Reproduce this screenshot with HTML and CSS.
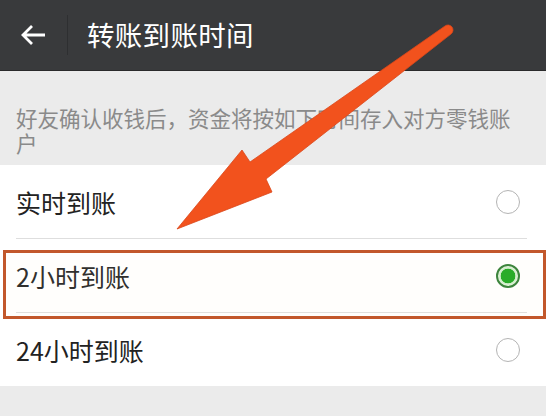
FILE: index.html
```html
<!DOCTYPE html>
<html lang="zh-CN">
<head>
<meta charset="utf-8">
<title>转账到账时间</title>
<link rel="stylesheet" href="styles.css">
</head>
<body>
<div class="page">
  <header class="topbar">
    <div class="back">
      <svg class="back-icon" viewBox="0 0 26 22" width="26" height="22">
        <path d="M25 11 H3 M12 2 L3 11 L12 20" fill="none" stroke="#ffffff" stroke-width="2.8" stroke-linecap="butt" stroke-linejoin="miter"/>
      </svg>
    </div>
    <div class="sep"></div>
    <h1 class="title">转账到账时间</h1>
  </header>

  <p class="desc">好友确认收钱后，资金将按如下时间存入对方零钱账户</p>

  <div class="list">
    <div class="row">
      <span class="label">实时到账</span>
      <span class="radio"></span>
    </div>
    <div class="divider"></div>
    <div class="row">
      <span class="label">2小时到账</span>
      <span class="radio radio-on"></span>
    </div>
    <div class="divider"></div>
    <div class="row">
      <span class="label">24小时到账</span>
      <span class="radio"></span>
    </div>
  </div>

  <div class="highlight"></div>

  <svg class="pointer" viewBox="0 0 546 416" width="546" height="416">
    <path d="M445 26 L250 162 L242 150 L177 229 L272 192 L266 179 L451 34 A5 5 0 0 0 445 26 Z" fill="#f2521d" stroke="#d9461a" stroke-width="0.8" stroke-linejoin="round"/>
  </svg>
</div>
</body>
</html>
```

FILE: styles.css
```css
html, body {
  margin: 0;
  padding: 0;
}

body {
  width: 546px;
  height: 416px;
  overflow: hidden;
  background: #ebebeb;
  font-family: "Noto Sans CJK SC", "Noto Sans", sans-serif;
}

.page {
  position: relative;
  width: 546px;
  height: 416px;
}

.topbar {
  height: 70px;
  background: #393a3c;
  display: flex;
  align-items: center;
  box-shadow: 0 1px 0 #2a2a2b;
}

.back {
  width: 67px;
  height: 70px;
  display: flex;
  align-items: center;
  padding-left: 20px;
  box-sizing: border-box;
}

.back-icon {
  display: block;
}

.sep {
  width: 1px;
  height: 40px;
  background: #2e2f31;
}

.title {
  margin: 0 0 0 19px;
  font-size: 27.5px;
  font-weight: 400;
  color: #ffffff;
  line-height: 1;
  letter-spacing: 0.3px;
}

.desc {
  margin: 0;
  padding: 35px 30px 10px 16px;
  height: 50px;
  font-size: 21.5px;
  line-height: 25px;
  color: #8a8a8a;
}

.list {
  background: #ffffff;
}

.row {
  height: 73px;
  display: flex;
  align-items: center;
  justify-content: space-between;
  padding: 0 26px 0 16px;
}

.label {
  font-size: 25px;
  color: #222222;
  line-height: 1;
  padding-top: 2px;
}

.divider {
  height: 1px;
  margin: 0 19px 0 16px;
  background: #dedede;
}

.radio {
  width: 24px;
  height: 24px;
  box-sizing: border-box;
  border-radius: 50%;
  border: 1.6px solid #b4b4b4;
  background: #ffffff;
}

.radio-on {
  border: 2px solid #2f7d32;
  background: radial-gradient(circle, #1aa71d 0, #1aa71d 7px, #c9ecc4 7.6px, #e4f5e0 10px);
}

.highlight {
  position: absolute;
  left: 3px;
  top: 250px;
  width: 543px;
  height: 69px;
  box-sizing: border-box;
  border: 3.5px solid #c2572b;
  background: rgba(255, 240, 215, 0.07);
}

.pointer {
  position: absolute;
  left: 0;
  top: 0;
  pointer-events: none;
}
```
